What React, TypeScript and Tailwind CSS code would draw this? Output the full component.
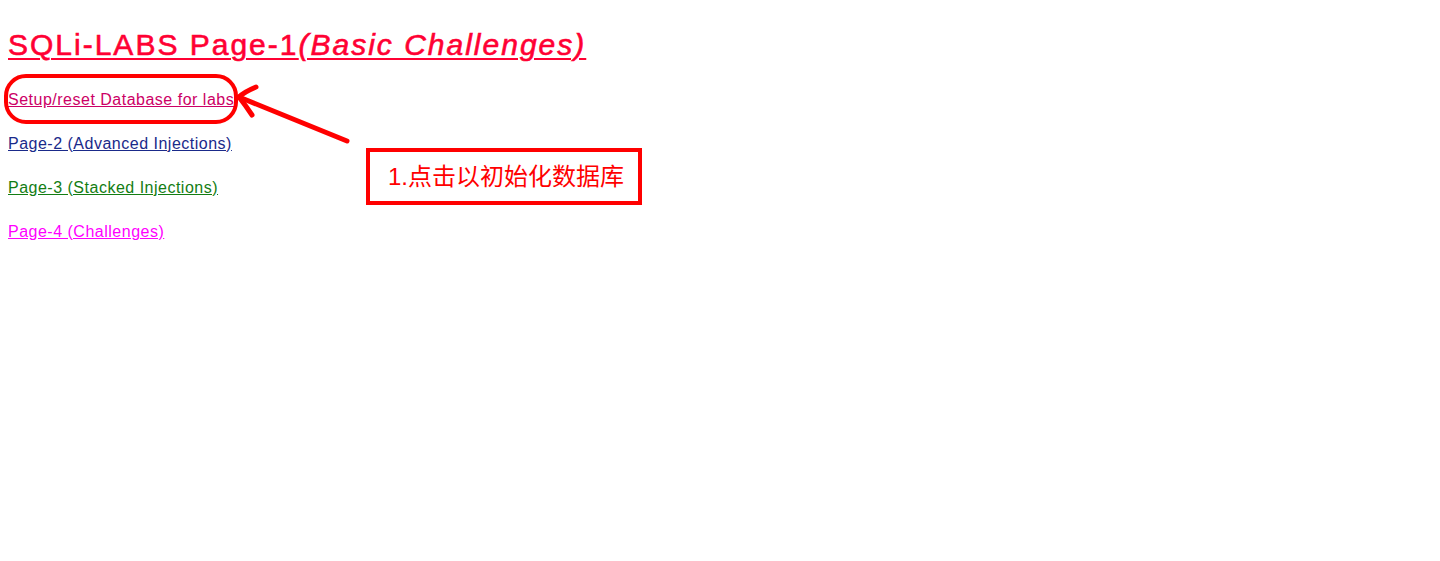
export default function App() {
  return (
    <div className="relative min-h-[561px] w-full bg-white px-2 pt-[26px] font-['Liberation_Sans','Noto_Sans_CJK_SC',sans-serif]">
      <a href="#" className="text-[30px] leading-[38px] tracking-[2px] text-[#ff0033] underline decoration-2 underline-offset-[3px] [-webkit-text-stroke:0.6px_#ff0033]">
        SQLi-LABS Page-1<i>(Basic Challenges)</i>
      </a>
      <div className="mt-[25px] flex flex-col items-start gap-[22px] text-[16px] leading-[22px] tracking-[0.5px]">
        <a href="#" className="text-[#cc0066] underline">Setup/reset Database for labs</a>
        <a href="#" className="text-[#1a2a8a] underline">Page-2 (Advanced Injections)</a>
        <a href="#" className="text-[#137d13] underline">Page-3 (Stacked Injections)</a>
        <a href="#" className="text-[#ff00ff] underline">Page-4 (Challenges)</a>
      </div>

      {/* annotation overlays */}
      <div className="absolute left-[4px] top-[74px] h-[50px] w-[234px] rounded-[22px] border-4 border-[#ff0000]" />
      <svg className="absolute left-0 top-0" width="400" height="200" viewBox="0 0 400 200">
        <g stroke="#ff0000" strokeWidth="5" strokeLinecap="round" fill="none">
          <line x1="347" y1="141" x2="239" y2="97" />
          <path d="M256 87 Q244 92 239 97 Q246 106 252 115" />
        </g>
      </svg>
      <div className="absolute left-[366px] top-[148px] flex h-[57px] w-[276px] items-center border-4 border-[#ff0000] pl-[18px] text-[24px] text-[#ff0000]">
        1.点击以初始化数据库
      </div>
    </div>
  );
}
